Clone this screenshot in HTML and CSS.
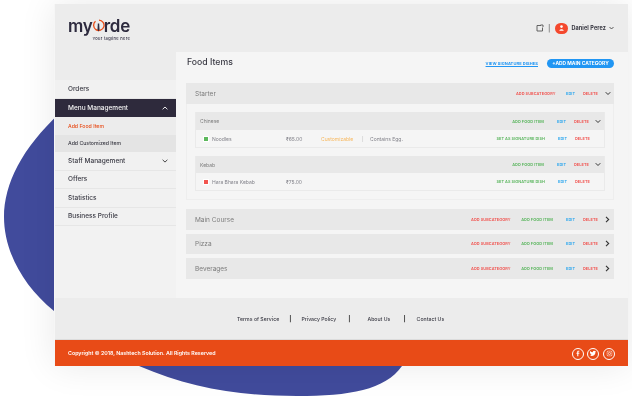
FILE: index.html
```html
<!DOCTYPE html>
<html lang="en">
<head>
<meta charset="utf-8">
<title>Myorde - Food Items</title>
<link rel="stylesheet" href="styles.css">
</head>
<body>
<svg class="blob" width="632" height="402" viewBox="0 0 632 402"><path d="M60 113C22 148 4 184 4 217C4 250 22 285 54 311C80 335 110 352 139 366C190 388 240 396 297 396C350 396 385 390 402 366L402 113Z"/></svg>
<div class="window">
  <header class="topbar">
    <div class="logo">
      <div class="logo-word">my<svg class="logo-pin" width="13" height="19" viewBox="0 0 13 19"><path d="M3.500 4.300A5.200 5.200 0 1 0 7 3.100" fill="none" stroke="#e84b17" stroke-width="1.300"/><path d="M5.800 6.500h1.400l.3 6-1 2-1-2z" fill="#2d2a3e"/></svg>rde</div>
      <div class="logo-tag">Your tagline here</div>
    </div>
    <div class="user">
      <svg class="ext" width="8" height="8" viewBox="0 0 8 8"><path d="M5 1.500H1v5.500h5.500V3.500M4.500 1h2.500v2" fill="none" stroke="#555" stroke-width=".9"/></svg>
      <span class="sep">|</span>
      <span class="avatar"><svg width="5" height="6" viewBox="0 0 5 6"><circle cx="2.500" cy="1.600" r="1.300" fill="#fff"/><path d="M.3 5.800C.5 3.800 4.500 3.800 4.700 5.800Z" fill="#fff"/></svg></span>
      <span class="user-name">Daniel Perez</span>
      <svg class="chev" width="5" height="4" viewBox="0 0 5 4"><path d="M.5 1l2 2 2-2" fill="none" stroke="#333" stroke-width=".8"/></svg>
    </div>
  </header>
  <div class="middle">
    <nav class="side">
      <a class="nav-item nav-first">Orders</a>
      <a class="nav-item nav-active">Menu Management<svg width="6" height="4" viewBox="0 0 6 4"><path d="M.6 3.300L3 1l2.400 2.300" fill="none" stroke="#fff" stroke-width=".9"/></svg></a>
      <a class="nav-sub nav-sub-current">Add Food Item</a>
      <a class="nav-sub">Add Customized Item</a>
      <a class="nav-item">Staff Management<svg width="6" height="4" viewBox="0 0 6 4"><path d="M.6 .8L3 3.100l2.400-2.300" fill="none" stroke="#333" stroke-width=".9"/></svg></a>
      <a class="nav-item">Offers</a>
      <a class="nav-item">Statistics</a>
      <a class="nav-item">Business Profile</a>
    </nav>
    <main class="content">
      <div class="title-row">
        <h1>Food Items</h1>
        <a class="sig-link">VIEW SIGNATURE DISHES</a>
        <a class="add-main">+ADD MAIN CATEGORY</a>
      </div>
      <section class="acc acc-open">
        <div class="acc-head">
          <span class="acc-name">Starter</span>
          <span class="acts"><a class="red w-sub">ADD SUBCATEGORY</a><a class="blue w-edit">EDIT</a><a class="red w-del">DELETE</a></span>
          <svg width="6" height="5" viewBox="0 0 6 5"><path d="M.7 1.200L3 3.500l2.300-2.300" fill="none" stroke="#333" stroke-width="1"/></svg>
        </div>
        <div class="acc-body">
          <div class="sub">
            <div class="sub-head">
              <span class="sub-name">Chinese</span>
              <span class="acts"><a class="green">ADD FOOD ITEM</a><a class="blue w-edit">EDIT</a><a class="red w-del">DELETE</a></span>
              <svg width="6" height="5" viewBox="0 0 6 5"><path d="M.7 1.200L3 3.500l2.300-2.300" fill="none" stroke="#333" stroke-width="1"/></svg>
            </div>
            <div class="dish">
              <span class="mark mark-green"></span>
              <span class="dish-name">Noodles</span>
              <span class="price">₹65.00</span>
              <span class="custom">Customizable</span>
              <span class="bar">|</span>
              <span class="egg">Contains Egg.</span>
              <span class="acts"><a class="green">SET AS SIGNATURE DISH</a><a class="blue w-edit">EDIT</a><a class="red w-del">DELETE</a></span>
            </div>
          </div>
          <div class="sub">
            <div class="sub-head">
              <span class="sub-name">Kebab</span>
              <span class="acts"><a class="green">ADD FOOD ITEM</a><a class="blue w-edit">EDIT</a><a class="red w-del">DELETE</a></span>
              <svg width="6" height="5" viewBox="0 0 6 5"><path d="M.7 1.200L3 3.500l2.300-2.300" fill="none" stroke="#333" stroke-width="1"/></svg>
            </div>
            <div class="dish">
              <span class="mark mark-red"></span>
              <span class="dish-name">Hara Bhara Kebab</span>
              <span class="price">₹75.00</span>
              <span class="acts"><a class="green">SET AS SIGNATURE DISH</a><a class="blue w-edit">EDIT</a><a class="red w-del">DELETE</a></span>
            </div>
          </div>
        </div>
      </section>
      <section class="acc acc-closed">
        <div class="acc-head">
          <span class="acc-name">Main Course</span>
          <span class="acts"><a class="red w-sub">ADD SUBCATEGORY</a><a class="green">ADD FOOD ITEM</a><a class="blue w-edit">EDIT</a><a class="red w-del">DELETE</a></span>
          <svg width="5" height="7" viewBox="0 0 5 7"><path d="M1 .8l2.700 2.700L1 6.200" fill="none" stroke="#333" stroke-width="1.100"/></svg>
        </div>
      </section>
      <section class="acc acc-closed">
        <div class="acc-head">
          <span class="acc-name">Pizza</span>
          <span class="acts"><a class="red w-sub">ADD SUBCATEGORY</a><a class="green">ADD FOOD ITEM</a><a class="blue w-edit">EDIT</a><a class="red w-del">DELETE</a></span>
          <svg width="5" height="7" viewBox="0 0 5 7"><path d="M1 .8l2.700 2.700L1 6.200" fill="none" stroke="#333" stroke-width="1.100"/></svg>
        </div>
      </section>
      <section class="acc acc-closed">
        <div class="acc-head">
          <span class="acc-name">Beverages</span>
          <span class="acts"><a class="red w-sub">ADD SUBCATEGORY</a><a class="green">ADD FOOD ITEM</a><a class="blue w-edit">EDIT</a><a class="red w-del">DELETE</a></span>
          <svg width="5" height="7" viewBox="0 0 5 7"><path d="M1 .8l2.700 2.700L1 6.200" fill="none" stroke="#333" stroke-width="1.100"/></svg>
        </div>
      </section>
    </main>
  </div>
  <div class="foot-links">
    <a>Terms of Service</a><span>|</span><a>Privacy Policy</a><span>|</span><a>About Us</a><span>|</span><a>Contact Us</a>
  </div>
  <footer class="foot-bar">
    <span class="copy">Copyright © 2018, Nashtech Solution. All Rights Reserved</span>
    <span class="socials">
      <span class="soc"><svg width="6" height="7" viewBox="0 0 6 7"><path d="M3.400 7V3.800h1.100l.2-1.200H3.400v-.8c0-.4.100-.6.600-.6h.7V.1H3.700c-1 0-1.600.6-1.600 1.600v.9H1.200v1.200h.9V7z" fill="#fff"/></svg></span>
      <span class="soc"><svg width="8" height="7" viewBox="0 0 8 7"><path d="M7.600 1.100c-.3.100-.6.200-.9.200.3-.2.600-.5.700-.9-.3.200-.6.300-1 .4C6.100.5 5.700.300 5.300.300c-.9 0-1.600.8-1.500 1.800C2.500 2 1.400 1.400.600.500.200 1.200.400 2.100 1.100 2.600c-.3 0-.5-.1-.7-.2 0 .8.500 1.400 1.200 1.500-.2.100-.5.100-.7 0 .2.600.8 1.100 1.500 1.100C1.700 5.500.900 5.800 0 5.700 2.900 7.500 7 5.900 6.900 1.800c.3-.2.500-.4.700-.7z" fill="#fff"/></svg></span>
      <span class="soc"><svg width="7" height="7" viewBox="0 0 7 7"><rect x=".5" y=".5" width="6" height="6" rx="1.700" fill="none" stroke="#fff" stroke-width=".8"/><circle cx="3.500" cy="3.500" r="1.300" fill="none" stroke="#fff" stroke-width=".8"/></svg></span>
    </span>
  </footer>
</div>
</body>
</html>
```
FILE: styles.css
```css
* { box-sizing: border-box; }
html, body { margin: 0; padding: 0; }
body {
  width: 632px;
  height: 402px;
  overflow: hidden;
  background: #fff;
  font-family: "Inter", "Liberation Sans", sans-serif;
  color: #3a3a44;
  padding: 4px 0 0 54px;
  position: relative;
}
a { display: block; }
.blob { position: absolute; left: 0; top: 0; fill: #414b9c; }
.window {
  position: relative;
  width: 574px;
  height: 362px;
  display: flex;
  flex-direction: column;
  box-shadow: 0 0 34px rgba(0,0,0,.09);
  border-left: 1px solid #f6f6f6;
  filter: blur(.3px);
}
.topbar {
  height: 48px;
  flex: none;
  background: #ececec;
  display: flex;
  align-items: center;
  justify-content: space-between;
  padding: 0 14px 0 13px;
}
.logo { margin-top: 2px; }
.logo-word {
  display: flex;
  align-items: center;
  font-size: 17px;
  line-height: 17px;
  font-weight: 600;
  color: #2d2a3e;
  letter-spacing: -.2px;
}
.logo-pin { flex: none; margin: 0 -1px 0 -1px; }
.logo-tag {
  font-size: 4px;
  line-height: 5px;
  text-align: right;
  font-weight: 500;
  color: #2d2a3e;
  letter-spacing: .3px;
}
.user { display: flex; align-items: center; }
.ext { margin-right: 4px; }
.sep { font-size: 7px; color: #444; margin-right: 5px; }
.avatar {
  width: 13px;
  height: 11px;
  border-radius: 6px;
  background: #f4482d;
  display: flex;
  align-items: center;
  justify-content: center;
  margin-right: 3px;
}
.user-name { font-size: 5.500px; font-weight: 700; color: #33333d; margin-right: 3px; letter-spacing: .1px; }
.middle { flex: none; height: 246px; display: flex; }
.side { width: 121px; flex: none; background: #f2f2f2; }
.side::before { content: ""; display: block; height: 28px; background: #ececec; }
.nav-item {
  height: 18.500px;
  display: flex;
  align-items: center;
  justify-content: space-between;
  padding: 0 8px 0 13px;
  font-size: 6.500px;
  font-weight: 500;
  color: #3a3a44;
  background: #f1f1f1;
  border-bottom: 1px solid #e6e6e6;
}
.nav-first { padding-top: 1px; }
.nav-active { background: #2e2a3c; color: #f4f4f4; border-bottom: 0; }
.nav-sub {
  height: 17.500px;
  display: flex;
  align-items: center;
  padding-left: 13px;
  font-size: 5.200px;
  font-weight: 500;
  color: #3a3a44;
  background: #e4e4e4;
}
.nav-sub-current { color: #e84b17; background: #ececec; }
.content { flex: 1; background: #f5f5f5; padding: 0 14px 0 10px; }
.title-row { height: 31px; display: flex; align-items: flex-start; padding: 5px 0 0 1px; }
.title-row h1 { margin: 0; font-size: 8.700px; line-height: 11px; font-weight: 500; color: #3a3a44; }
.sig-link {
  margin: 2px 9px 0 auto;
  line-height: 9px;
  font-size: 4px;
  font-weight: 700;
  color: #2196f3;
  text-decoration: underline;
  letter-spacing: .1px;
}
.add-main {
  margin-top: 2px;
  width: 67px;
  height: 9px;
  line-height: 9px;
  border-radius: 5px;
  background: #2196f3;
  color: #fff;
  font-size: 4.900px;
  font-weight: 700;
  text-align: center;
}
.acc-head {
  display: flex;
  align-items: center;
  background: #e8e8e8;
  padding: 0 3px 0 9px;
}
.acc-open .acc-head { height: 21px; }
.acc-closed { margin-top: 4px; }
.acc-open + .acc-closed { margin-top: 9px; }
.acc-closed .acc-head { height: 20.500px; padding-right: 4px; }
.acc-name { font-size: 6.500px; color: #7c7c7c; padding-top: 1px; }
.acts {
  margin-left: auto;
  display: flex;
  align-items: center;
  gap: 8px;
  font-size: 3.900px;
  font-weight: 600;
  letter-spacing: .06px;
}
.red { color: #f1504c; }
.green { color: #56b45a; margin-right: 5px; }
.blue { color: #25a4ee; }
.w-edit { width: 9px; text-align: center; }
.w-del { width: 14px; text-align: left; }
.w-sub { margin-right: 2.500px; }
.acc-head > svg { margin-left: 8px; flex: none; }
.acc-body {
  background: #f5f5f5;
  border: 1px solid #eeeeee;
  border-top: 0;
  padding: 8px;
}
.sub { border: 1px solid #eaeaea; border-top: 0; }
.sub + .sub { margin-top: 8px; }
.sub-head {
  height: 18px;
  display: flex;
  align-items: center;
  background: #e8e8e8;
  padding: 0 3px 0 4px;
}
.sub + .sub .sub-head { height: 17px; }
.sub-name { font-size: 5px; color: #7c7c7c; }
.sub-head > svg { margin-left: 7px; flex: none; }
.dish {
  height: 17px;
  display: flex;
  align-items: center;
  padding: 0 15px 0 7px;
  font-size: 5px;
  color: #82828a;
}
.mark { width: 6px; height: 6px; flex: none; margin-right: 3px; border: 1px solid #fff; }
.mark-green { background: #5cb85c; }
.mark-red { background: #f2554f; }
.dish-name { width: 74px; }
.price { width: 35px; }
.custom { color: #f7b75c; width: 41px; }
.bar { color: #bbb; width: 8px; }
.foot-links {
  height: 42px;
  flex: none;
  background: #ececec;
  border-bottom: 1px solid #dcdcdc;
  display: flex;
  align-items: center;
  padding-left: 182px;
  font-size: 5.200px;
  font-weight: 500;
  color: #3a3a44;
}
.foot-links span { margin: 0 10px; font-size: 6px; font-weight: 700; color: #333; }
.foot-links span:nth-of-type(2) { margin: 0 17px 0 12px; }
.foot-links span:nth-of-type(3) { margin: 0 11px 0 13px; }
.foot-bar {
  flex: none;
  height: 26px;
  background: #e84b17;
  display: flex;
  align-items: center;
  justify-content: space-between;
  padding: 0 13px 0 13px;
}
.copy { font-size: 5.300px; font-weight: 600; color: #fff; }
.socials { display: flex; gap: 3.700px; margin-top: 1px; }
.soc {
  width: 12px;
  height: 12px;
  border: 1px solid #fff;
  border-radius: 50%;
  display: flex;
  align-items: center;
  justify-content: center;
}
.soc svg { transform: scale(.85); }
```
